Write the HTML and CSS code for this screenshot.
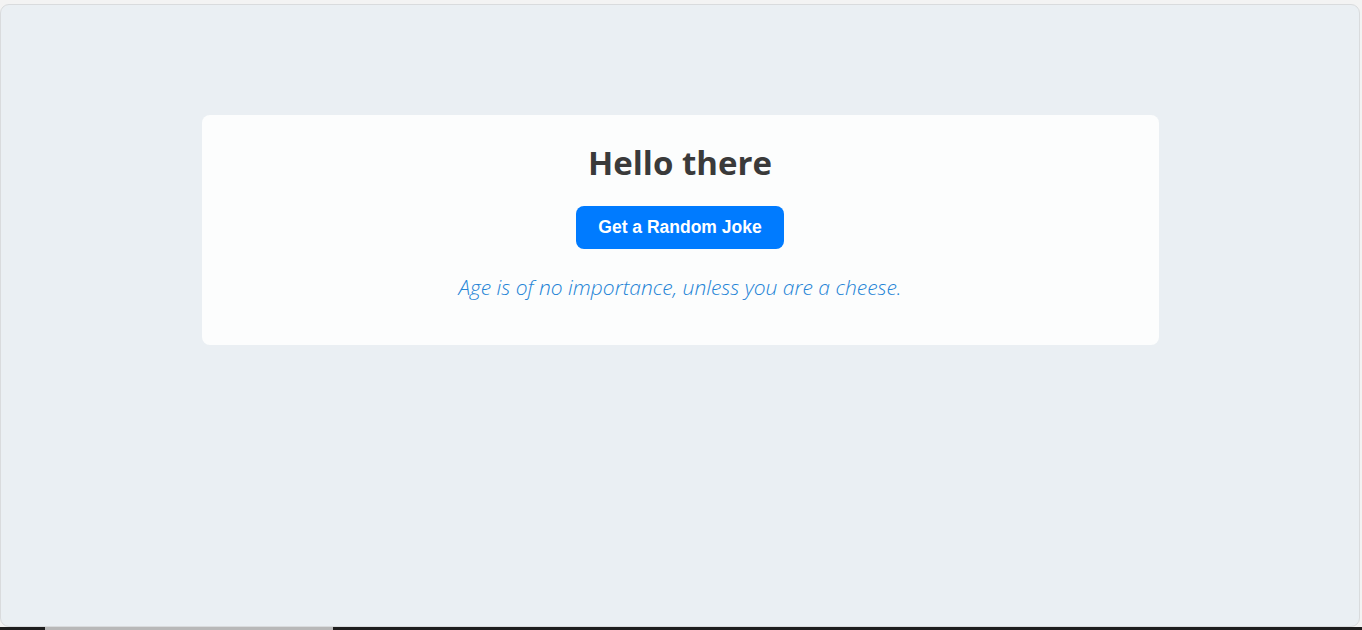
FILE: index.html
```html
<!DOCTYPE html>
<html>
<head>
<meta charset="utf-8">
<link rel="stylesheet" href="styles.css">
</head>
<body>
<div class="frame">
  <div class="card">
    <h1 class="title">Hello there</h1>
    <button class="joke-btn">Get a Random Joke</button>
    <p class="quote">Age is of no importance, unless you are a cheese.</p>
  </div>
</div>
<div class="taskbar">
  <div class="tb-dark tb-a"></div>
  <div class="tb-gray tb-b"></div>
  <div class="tb-dark tb-c"></div>
</div>
</body>
</html>
```

FILE: styles.css
```css
html, body {
  margin: 0;
  padding: 0;
  width: 1362px;
  height: 630px;
  overflow: hidden;
  background: #f3f3f3;
}
.frame {
  box-sizing: border-box;
  margin: 4px 2px 0 0;
  height: 623px;
  border: 1px solid #d9dbdd;
  border-radius: 9px;
  background: #eaeff3;
  padding-top: 110px;
  display: flex;
  flex-direction: column;
  align-items: center;
}
.card {
  box-sizing: border-box;
  width: 957px;
  height: 230px;
  background: #fcfdfd;
  border-radius: 8px;
  display: flex;
  flex-direction: column;
  align-items: center;
  padding-top: 26px;
}
.title {
  margin: 0;
  font-family: "Open Sans", "Noto Sans", sans-serif;
  font-weight: 700;
  font-size: 33px;
  line-height: 44px;
  color: #3a3a3a;
}
.joke-btn {
  margin-top: 21px;
  width: 208px;
  height: 43px;
  padding: 0;
  border: none;
  border-radius: 8px;
  background: #007bff;
  color: #ffffff;
  font-family: "Liberation Sans", Arial, sans-serif;
  font-weight: 700;
  font-size: 17.5px;
  cursor: pointer;
}
.quote {
  margin: 24px 0 0;
  font-family: "Open Sans", "Noto Sans", sans-serif;
  font-weight: 300;
  font-style: italic;
  font-size: 21px;
  line-height: 28px;
  color: #2484d6;
}
.taskbar {
  display: flex;
  height: 3px;
}
.tb-dark { background: #1e1e1e; }
.tb-gray { background: #b8b8b8; }
.tb-a { width: 45px; }
.tb-b { width: 288px; }
.tb-c { flex: 1; }
```
